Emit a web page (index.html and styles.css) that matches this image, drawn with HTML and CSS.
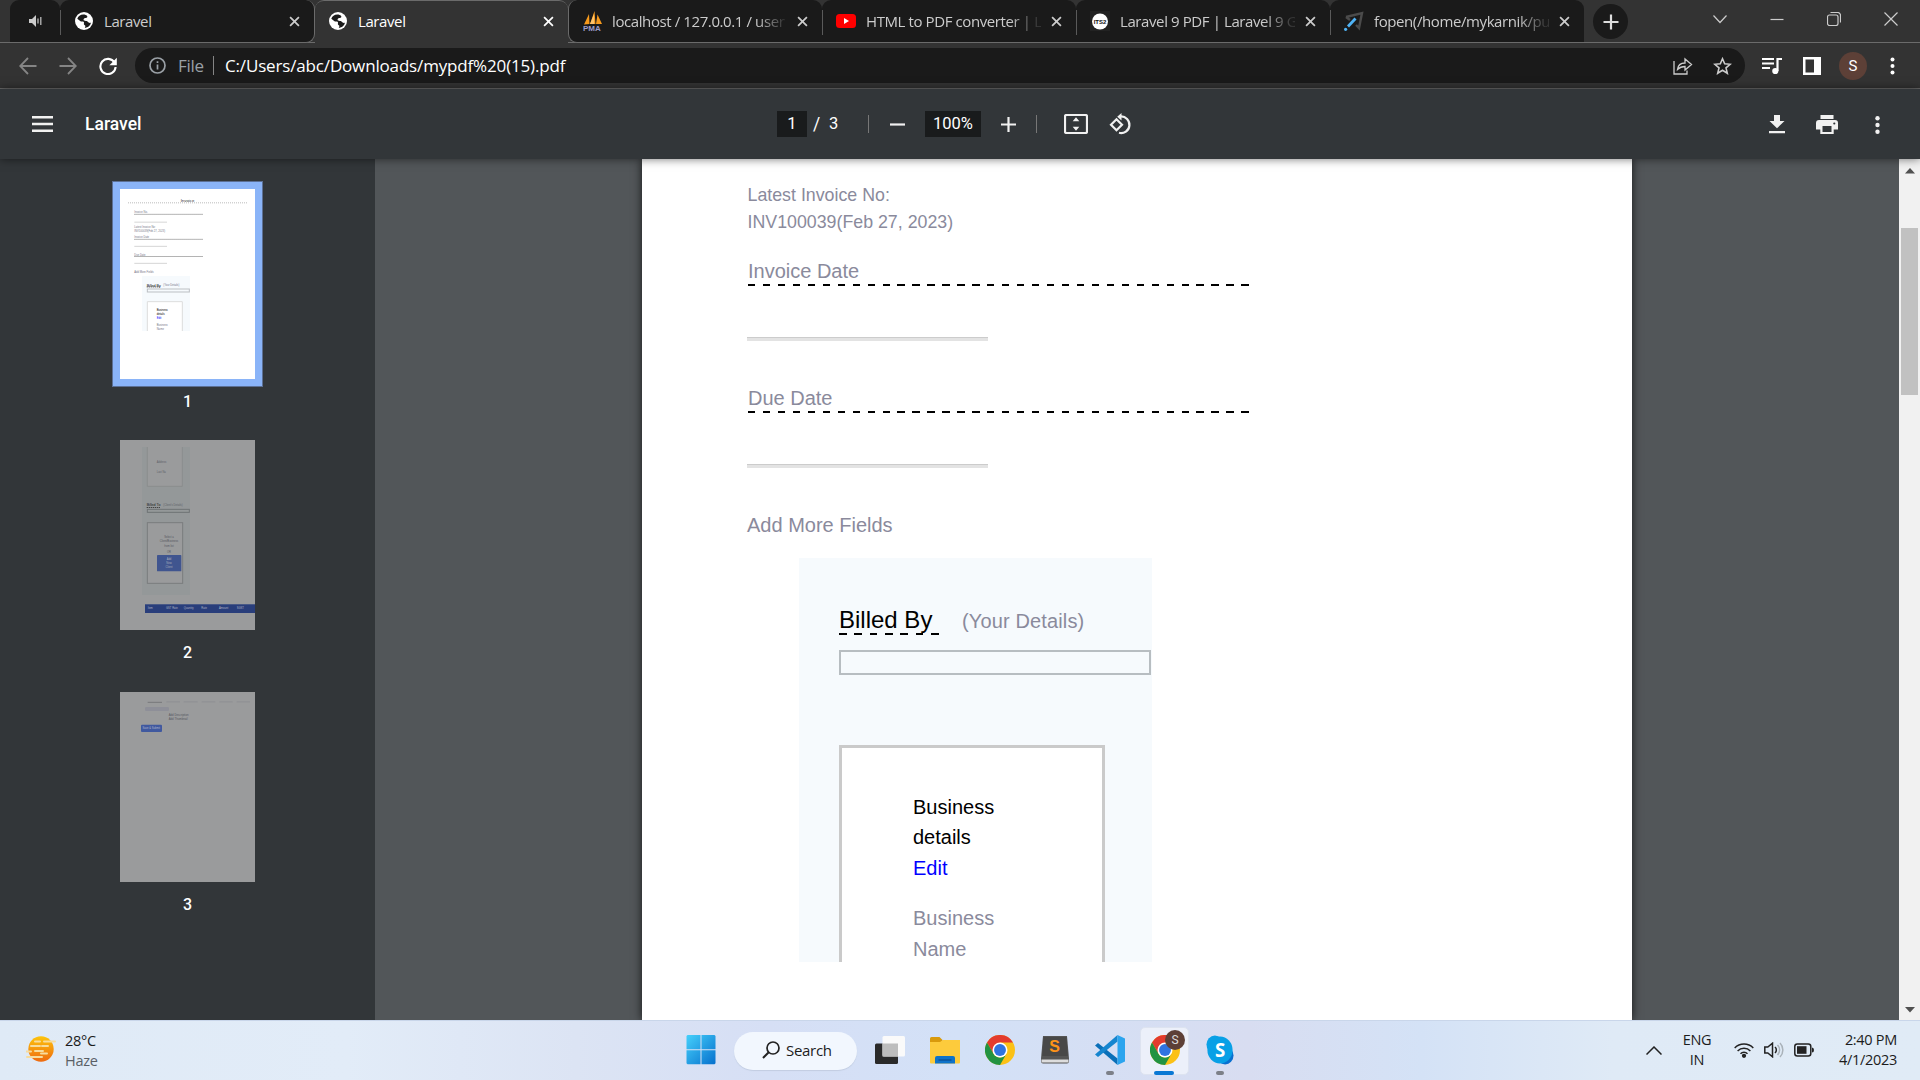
FILE: index.html
```html
<!DOCTYPE html>
<html lang="en">
<head>
<meta charset="utf-8">
<title>Laravel</title>
<link rel="stylesheet" href="styles.css">
</head>
<body>
<svg class="defs" aria-hidden="true">
  <symbol id="globe" viewBox="0 0 18 18"><circle cx="9" cy="9" r="9" fill="#fff"/><path d="M9.500 2.600C6 2 3.200 4 2.300 6.800l3.200 2.400c1 .6 2.500-.2 3.300.8.700.9-.3 1.700.2 2.600.4.800 1.300.6 1.400 1.600l-.6 1.600c3.200 0 5.600-2.200 6.100-5-1.600.4-2.500-.2-3.400-1.200-.9-.9-2.300-.4-3.300-1-.9-.6-.8-1.600 0-2.200.9-.7 2.400-.1 3-1.100.5-.8-.3-1.600-1-2z" fill="#1b1b1b"/></symbol>
  <symbol id="x" viewBox="0 0 12 12"><path d="M1.200 1.200l9.600 9.600M10.800 1.200L1.200 10.800" stroke="currentColor" stroke-width="1.900" fill="none"/></symbol>
  <symbol id="chrome" viewBox="0 0 48 48"><circle cx="24" cy="24" r="24" fill="#fbc116"/><path d="M24 12h20.800A24 24 0 0 0 3.200 12l10.400 18z" fill="#e33b2e"/><path d="M3.200 12A24 24 0 0 0 24 48l10.400-18A12 12 0 0 1 13.600 30z" fill="#229342"/><circle cx="24" cy="24" r="12" fill="#fff"/><circle cx="24" cy="24" r="9.500" fill="#2f73e0"/></symbol>
</svg>

<header class="tabs">
  <div class="tab pinned">
    <svg width="14" height="14" viewBox="0 0 14 14"><path d="M0 5h3l4-4v12L3 9H0z" fill="#ccc"/><path d="M9 4.500v5M11.800 3v8" stroke="#bbb" stroke-width="1.300"/></svg>
  </div>
  <div class="tab before">
    <svg class="fav"><use href="#globe"/></svg><span class="name">Laravel</span><svg class="close"><use href="#x"/></svg>
  </div>
  <div class="tab active">
    <svg class="fav"><use href="#globe"/></svg><span class="name">Laravel</span><svg class="close"><use href="#x"/></svg>
  </div>
  <div class="tab after">
    <svg class="fav wide" viewBox="0 0 20 20"><path d="M1 13.500L6 3l.5 10zM7 13L11.500 0l1 13zM13 13L14.500 3.500 19 13z" fill="#f79a1c"/><path d="M7 13L11 3l.2 10z" fill="#ffc36b"/><text x="0" y="19.500" class="pma">PMA</text></svg><span class="name fade">localhost / 127.0.0.1 / user</span><svg class="close"><use href="#x"/></svg>
  </div>
  <div class="tab sep">
    <svg class="fav wide" viewBox="0 0 20 20"><rect y="3" width="20" height="14" rx="3.500" fill="#f00"/><path d="M8 7l5 3-5 3z" fill="#fff"/></svg><span class="name fade">HTML to PDF converter | L</span><svg class="close"><use href="#x"/></svg>
  </div>
  <div class="tab sep">
    <svg class="fav wide" viewBox="0 0 20 20"><rect width="20" height="20" fill="#222"/><circle cx="10" cy="10.500" r="8" fill="#fff"/><text x="10" y="13" class="its">ITS2</text></svg><span class="name fade">Laravel 9 PDF | Laravel 9 G</span><svg class="close"><use href="#x"/></svg>
  </div>
  <div class="tab sep">
    <svg class="fav wide" viewBox="0 0 20 20"><path d="M2 6L18 2l-3 15-3-3M2 6l4 3" fill="none" stroke="#4b4b4b" stroke-width="2.400"/><path d="M4 15.500L11.500 7.500" stroke="#4fb3f6" stroke-width="2.800"/><circle cx="1.600" cy="18.300" r="1.600" fill="#4fb3f6"/></svg><span class="name fade">fopen(/home/mykarnik/pu</span><svg class="close"><use href="#x"/></svg>
  </div>
  <div class="newtab"><svg width="16" height="16" viewBox="0 0 16 16"><path d="M8 .5v15M.5 8h15" stroke="#ddd" stroke-width="2.200"/></svg></div>
  <div class="winctl">
    <svg width="14" height="14" viewBox="0 0 14 14"><path d="M.5 3.500l6.500 7 6.500-7" /></svg>
    <svg width="14" height="14" viewBox="0 0 14 14"><path d="M.5 7.500h13" stroke="#fff"/></svg>
    <svg width="14" height="14" viewBox="0 0 14 14"><rect x=".5" y="3" width="10.500" height="10.500" rx="2" stroke="#fff"/><path d="M3.500.5h7a3 3 0 0 1 3 3v7" stroke="#fff"/></svg>
    <svg width="14" height="14" viewBox="0 0 14 14"><path d="M.5.5l13 13M13.500.5l-13 13" stroke="#fff"/></svg>
  </div>
</header>

<nav class="addressbar">
  <div class="navs">
    <svg width="18" height="18" viewBox="0 0 18 18"><path d="M17.500 9H1.500M9 1L1.200 9 9 17" stroke="#858585" stroke-width="1.800" fill="none"/></svg>
    <svg width="18" height="18" viewBox="0 0 18 18"><path d="M.5 9h16M9 1l7.800 8L9 17" stroke="#858585" stroke-width="1.800" fill="none"/></svg>
    <svg width="18" height="18" viewBox="0 0 18 18"><path d="M15.500 5.500A7.600 7.600 0 1 0 16.600 10" stroke="#fff" stroke-width="2.100" fill="none"/><path d="M17.800.8v7.400h-7.400z" fill="#fff"/></svg>
  </div>
  <div class="omnibox">
    <svg width="17" height="17" viewBox="0 0 17 17"><circle cx="8.500" cy="8.500" r="7.500" stroke="#9aa0a6" stroke-width="1.700" fill="none"/><path d="M8.500 7.500v5M8.500 4.300v1.800" stroke="#9aa0a6" stroke-width="1.700"/></svg>
    <span class="scheme">File</span><span class="bar"></span><span class="url">C:/Users/abc/Downloads/mypdf%20(15).pdf</span>
    <svg class="share" width="20" height="18" viewBox="0 0 20 18"><path d="M1 4v13h13v-3.500" /><path d="M4.500 12.500C5 8 8 6 12 6V2l6.500 5.500L12 13V9.500C8.500 9.500 6.500 10.500 4.500 12.500z"/></svg>
    <svg width="19" height="18" viewBox="0 0 19 18"><path d="M9.500 1.800l2.200 5 5.500.5-4.200 3.600 1.300 5.300-4.800-2.900-4.800 2.900L6 10.900 1.800 7.300l5.500-.5z" stroke="#ccc" stroke-width="1.600" fill="none"/></svg>
  </div>
  <div class="ext">
    <svg width="20" height="18" viewBox="0 0 20 18"><path d="M0 2h12M0 6.500h12M0 11h8" stroke="#fff" stroke-width="2"/><path d="M15.500 14V2H20" stroke="#fff" stroke-width="2.200" fill="none"/><circle cx="13.300" cy="14" r="3.100" fill="#fff"/></svg>
    <svg width="18" height="18" viewBox="0 0 18 18"><path d="M0 0h18v18H0z" fill="#fff"/><path d="M2.500 2.500h8.500v13H2.500z" fill="#333"/></svg>
    <span class="avatar">S</span>
    <svg width="5" height="18" viewBox="0 0 5 18"><circle cx="2.500" cy="2.500" r="2"/><circle cx="2.500" cy="9" r="2"/><circle cx="2.500" cy="15.500" r="2"/></svg>
  </div>
</nav>

<section class="pdfbar">
  <div class="pdf-left">
    <svg width="21" height="16" viewBox="0 0 21 16"><path d="M0 1.300h21M0 8h21M0 14.700h21" stroke="#f1f1f1" stroke-width="2.400"/></svg>
    <b>Laravel</b>
  </div>
  <div class="pdf-mid">
    <span class="field pg">1</span><span class="slash">/</span><span class="total">3</span>
    <i class="divider"></i>
    <svg class="minus" width="15" height="15" viewBox="0 0 15 15"><path d="M0 7.500h15"/></svg>
    <span class="field zoom">100%</span>
    <svg class="plus" width="15" height="15" viewBox="0 0 15 15"><path d="M0 7.500h15M7.500 0v15"/></svg>
    <i class="divider"></i>
    <svg class="fit" width="24" height="20" viewBox="0 0 24 20"><rect x="1" y="1" width="22" height="18" rx="1.500"/><path d="M12 3.200l3.300 4H8.700zM12 16.800l3.300-4H8.700z" class="solid"/></svg>
    <svg class="rot" width="23" height="22" viewBox="0 0 23 22"><path d="M7.500 6.300L13 11.800l-5.500 5.500L2 11.800z"/><path d="M11.500 3.500a8.300 8.300 0 1 1-1.500 16.300"/><path d="M12.500 0v7.500L8.200 3.700z" class="solid"/></svg>
  </div>
  <div class="pdf-right">
    <svg width="16" height="19" viewBox="0 0 16 19"><path d="M5 0h6v6h4.500L8 13.300.5 6H5zM0 16h16v2.300H0z"/></svg>
    <svg width="22" height="19" viewBox="0 0 22 19"><path d="M4.500 0h13v4h-13zM3 5h16a3 3 0 0 1 3 3v6.500h-4.300V19H4.300v-4.500H0V8a3 3 0 0 1 3-3z"/><path d="M6.500 11h9v6h-9z" fill="#323639"/><circle cx="18.300" cy="8.500" r="1.100" fill="#323639"/></svg>
    <svg width="5" height="18" viewBox="0 0 5 18"><circle cx="2.500" cy="2.300" r="2.200"/><circle cx="2.500" cy="9" r="2.200"/><circle cx="2.500" cy="15.700" r="2.200"/></svg>
  </div>
</section>

<main class="viewer">
  <aside class="thumbs">
    <div class="thumb selected">
      <svg viewBox="90 87 405 570">
        <rect x="90" y="87" width="405" height="570" fill="#fff"/>
        <text x="272" y="126" font-size="13" fill="#333">Invoice</text>
        <path d="M114 128.500h357" stroke="#bbb" stroke-width="3" stroke-dasharray="3 3"/>
        <g font-size="8" fill="#778">
          <text x="133" y="159">Invoice No.</text><text x="133" y="204">Latest Invoice No:</text><text x="133" y="215">INV100039(Feb 27, 2023)</text><text x="133" y="233">Invoice Date</text><text x="133" y="288">Due Date</text><text x="133" y="339">Add More Fields</text>
        </g>
        <path d="M133 163h206M133 238h206M133 289.500h206" stroke="#777" stroke-width="2.500" stroke-dasharray="4 2"/>
        <path d="M133 186.500h98M133 259h98M133 310h98" stroke="#ccc" stroke-width="2.500"/>
        <rect x="156" y="348" width="144" height="165" fill="#f6fafd"/>
        <text x="170" y="380" font-size="11" fill="#000">Billed By</text><text x="220" y="378" font-size="8" fill="#778">(Your Details)</text>
        <path d="M170 381h42" stroke="#444" stroke-width="2" stroke-dasharray="4 2"/>
        <rect x="172" y="387" width="126" height="9" fill="none" stroke="#bbbfc3" stroke-width="3"/>
        <path d="M172 513v-88h105v88" fill="#fff" stroke="#ddd" stroke-width="3"/>
        <g font-size="8.200"><text x="200" y="453">Business</text><text x="200" y="465">details</text><text x="200" y="477" fill="#00f">Edit</text><text x="200" y="498" fill="#778">Business</text><text x="200" y="510" fill="#778">Name</text></g>
      </svg>
    </div>
    <span class="num">1</span>
    <div class="thumb">
      <svg viewBox="90 60 405 570">
        <rect x="90" y="60" width="405" height="570" fill="#9a9b9c"/>
        <rect x="156" y="81" width="144" height="444" fill="#949899"/>
        <path d="M172 81v118h105V81" fill="#9a9b9c" stroke="#888b8c" stroke-width="2.500"/>
        <g font-size="8" fill="#60626a"><text x="200" y="129">Address</text><text x="200" y="159">Last Na</text><text x="220" y="258">(Client's Details)</text></g>
        <text x="170" y="258" font-size="11" fill="#222">Billed To</text>
        <path d="M170 262.500h42" stroke="#333" stroke-width="2.500" stroke-dasharray="4 2"/>
        <rect x="172" y="268" width="126" height="9" fill="none" stroke="#6f7375" stroke-width="3"/>
        <rect x="172" y="308" width="106" height="182" fill="#9a9b9c" stroke="#7a7d7e" stroke-width="3"/>
        <g font-size="8" fill="#55575f" text-anchor="middle"><text x="237" y="354">Select a</text><text x="237" y="366">Client/Business</text><text x="237" y="381">from list</text><text x="237" y="399">OR</text></g>
        <rect x="201" y="405" width="73" height="49" rx="2" fill="#40558f"/>
        <g font-size="8" fill="#a8adba" text-anchor="middle"><text x="237" y="420">Add</text><text x="237" y="432">New</text><text x="237" y="444">Client</text></g>
        <rect x="165" y="552" width="330" height="27" fill="#293e7b"/><path d="M165 553.500h330" stroke="#5a668c" stroke-width="2"/>
        <g font-size="8" fill="#aeb3c1"><text x="173" y="567">Item</text><text x="228" y="567">GST Rate</text><text x="281" y="567">Quantity</text><text x="334" y="567">Rate</text><text x="387" y="567">Amount</text><text x="440" y="567">SGST</text></g>
      </svg>
    </div>
    <span class="num">2</span>
    <div class="thumb">
      <svg viewBox="90 66 405 570">
        <rect x="90" y="66" width="405" height="570" fill="#9a9b9c"/>
        <path d="M229 95.500h41M281 95.500h42M335 95.500h41M388 95.500h40M440 95.500h40" stroke="#909194" stroke-width="4"/><path d="M173 97h43" stroke="#77797b" stroke-width="3"/>
        <rect x="165" y="111" width="72" height="12" rx="4" fill="#8e8f98"/>
        <g font-size="8.500" fill="#55575f"><text x="236" y="138">Add Description</text><text x="236" y="150">Add Thumbnail</text></g>
        <rect x="153" y="164" width="63" height="22" rx="3" fill="#40599f"/><text x="184" y="177" font-size="8" fill="#b0b6ca" text-anchor="middle">Save &amp; Submit</text>
      </svg>
    </div>
    <span class="num">3</span>
  </aside>

  <section class="canvas">
    <article class="page">
      <p class="latest">Latest Invoice No:<br>INV100039(Feb 27, 2023)</p>
      <label class="label">Invoice Date</label>
      <div class="dashes"></div>
      <div class="rule"></div>
      <label class="label due">Due Date</label>
      <div class="dashes"></div>
      <div class="rule"></div>
      <p class="more">Add More Fields</p>
      <div class="billed">
        <div class="billed-head"><h2>Billed By</h2><span>(Your Details)</span></div>
        <div class="select"></div>
        <div class="details">
          <p>Business<br>details<br><a>Edit</a></p>
          <p class="muted">Business<br>Name</p>
        </div>
      </div>
    </article>
  </section>

  <div class="scrollbar">
    <svg width="10" height="6" viewBox="0 0 10 6"><path d="M5 0l5 5.500H0z" fill="#505050"/></svg>
    <div class="grip"></div>
    <svg class="down" width="10" height="6" viewBox="0 0 10 6"><path d="M5 5.500L0 0h10z" fill="#505050"/></svg>
  </div>
</main>

<footer class="taskbar">
  <div class="weather">
    <svg width="30" height="26" viewBox="0 0 30 26"><defs><linearGradient id="sun" x1="0" y1="0" x2="0" y2="1"><stop offset="0" stop-color="#fdc40c"/><stop offset="1" stop-color="#ee6a10"/></linearGradient></defs><circle cx="15" cy="13" r="12.700" fill="url(#sun)"/><path d="M9 5.500h5M18 5.500h11M5 10h9M16 10h6M9 15h8M0 15.500h5M15 17.500h6M1 21h15" stroke="#f7dc9d" stroke-width="2" stroke-linecap="round"/></svg>
    <div>28°C<br><span>Haze</span></div>
  </div>
  <div class="apps">
    <div class="app"><svg width="30" height="30" viewBox="0 0 30 30"><defs><linearGradient id="win" x1="0" y1="0" x2="1" y2="1"><stop offset="0" stop-color="#45d0fb"/><stop offset="1" stop-color="#0670cd"/></linearGradient></defs><path d="M1.500 0H14.500v14.300H.5V1zM15.500 0h13l1 1v13.300h-14zM.5 15.300h14v14H1.500l-1-1zM15.500 15.300h14v13l-1 1h-13z" fill="url(#win)"/></svg></div>
    <div class="search"><svg width="18" height="18" viewBox="0 0 18 18"><circle cx="11" cy="7" r="6" fill="none" stroke="#222" stroke-width="1.700"/><path d="M6.700 11.300L1 17" stroke="#222" stroke-width="2"/></svg><span>Search</span></div>
    <div class="app"><svg width="30" height="30" viewBox="0 0 30 30"><rect x="0" y="8.500" width="23" height="20.500" rx="1.500" fill="#2a2a2a"/><rect x="7.500" y="1" width="22.500" height="20.500" rx="1.500" fill="#fafafa"/><path d="M7.500 8.500H23v13H7.500z" fill="#bdbdbd"/></svg></div>
    <div class="app"><svg width="30" height="30" viewBox="0 0 30 30"><path d="M0 3.500A1.500 1.500 0 0 1 1.500 2h8l3 3v4H0z" fill="#d99a0c"/><path d="M0 7h10l3-2h17v22.500a1 1 0 0 1-1 1H1a1 1 0 0 1-1-1z" fill="#fdcb3c"/><path d="M5 28.500V23a2 2 0 0 1 2-2h16a2 2 0 0 1 2 2v5.500z" fill="#0f73c9"/><path d="M8.500 25h13" stroke="#0b4f94" stroke-width="1.300"/></svg></div>
    <div class="app"><svg width="30" height="30"><use href="#chrome"/></svg></div>
    <div class="app"><svg width="30" height="30" viewBox="0 0 30 30"><path d="M3 1h24l2 22.500v3a2 2 0 0 1-2 2H3a2 2 0 0 1-2-2v-3z" fill="#555"/><path d="M3.500 2h23l1.300 19H2.200z" fill="#484848"/><path d="M1.500 24.500h27v3h-27z" fill="#ddd"/><text x="14.500" y="17" class="subl">S</text></svg></div>
    <div class="app run"><svg width="30" height="30" viewBox="0 0 30 30"><path d="M0 10.500L3 8l19.500 15.500V30z" fill="#0a6fb8"/><path d="M0 19.500L3 22 22.500 6.500V0z" fill="#1585cf"/><path d="M22.500 0L30 3.500v23L22.500 30z" fill="#2ba4ee"/></svg></div>
    <div class="app current"><svg width="30" height="30"><use href="#chrome"/></svg><span class="badge">S</span></div>
    <div class="app run"><svg width="28" height="30" viewBox="0 0 30 30" preserveAspectRatio="none"><circle cx="9.500" cy="9.500" r="9" fill="#0aa0e6"/><circle cx="20.500" cy="20.500" r="9" fill="#0a70d0"/><circle cx="15" cy="15" r="13.500" fill="#08a0e6"/><text x="15" y="22" class="sky">S</text></svg></div>
  </div>
  <div class="tray">
    <svg class="chev" width="16" height="9" viewBox="0 0 16 9"><path d="M.5 8.500L8 1l7.500 7.500" fill="none" stroke="#222" stroke-width="1.500"/></svg>
    <div class="lang">ENG<br>IN</div>
    <svg class="wifi" width="20" height="16" viewBox="0 0 20 16" fill="none" stroke="#222" stroke-width="1.500"><path d="M.7 6a13 13 0 0 1 18.600 0M3.600 9a9 9 0 0 1 12.800 0M6.500 11.800a5 5 0 0 1 7 0"/><circle cx="10" cy="13.800" r="1.400" fill="#222"/></svg>
    <svg class="snd" width="20" height="16" viewBox="0 0 20 16" fill="none" stroke="#222" stroke-width="1.500"><path d="M.8 5h3L8.500 1.200v13.600L3.800 11h-3zM11 5a4 4 0 0 1 0 6"/><path d="M13.500 3a7 7 0 0 1 0 10M16 1a10 10 0 0 1 0 14" stroke="#aab2b9"/></svg>
    <svg class="bat" width="20" height="14" viewBox="0 0 20 14"><rect x=".8" y="1" width="16" height="12" rx="2.500" fill="none" stroke="#222" stroke-width="1.500"/><rect x="3" y="3.200" width="9.500" height="7.600" fill="#222"/><path d="M18 4.500q2 0 2 2.500t-2 2.500z" fill="#222"/></svg>
    <div class="clock">2:40 PM<br>4/1/2023</div>
  </div>
</footer>
</body>
</html>
```

FILE: styles.css
```css
* { box-sizing: border-box; }
body { margin: 0; width: 1920px; height: 1080px; overflow: hidden; display: flex; flex-direction: column; font-family: "Open Sans", "Noto Sans", sans-serif; background: #333; }
p, h2 { margin: 0; font-weight: 400; }
svg { display: block; flex: none; }
.defs { width: 0; height: 0; position: absolute; }

/* Tab strip */
.tabs { height: 43px; flex: none; display: flex; padding-left: 10px; background: #333; box-shadow: inset 0 -1px #6b6b6b; }
.tab { width: 254px; height: 42px; display: flex; align-items: center; padding: 0 14px 0 15px; background: #1a1a1a; border-radius: 9px 9px 0 0; color: #ccc; }
.tab.pinned { width: 50px; justify-content: center; padding: 0 0 0 2px; }
.tab.before { width: 255px; height: 43px; border: 0 solid #6b6b6b; border-width: 0 1px 1px 0; border-radius: 9px 9px 9px 0; }
.tab.active { width: 253px; height: 43px; padding-left: 14px; background: #333; border-top: 1px solid #6b6b6b; padding-bottom: 2px; color: #fff; }
.tab.after { height: 43px; border: 0 solid #6b6b6b; border-width: 0 0 1px 1px; border-radius: 9px 9px 0 9px; padding-left: 15px; }
.tab.sep, .tab.before { background: linear-gradient(#5a5a5a, #5a5a5a) 0 10px / 1px 25px no-repeat #1a1a1a; }
.fav { width: 18px; height: 18px; margin-right: 11px; }
.fav.wide { width: 20px; height: 20px; margin: 0 9px 0 -1px; }
.tab.sep .fav.wide { margin-left: -1px; margin-right: 10px; }
.name { flex: 1; font-size: 15px; line-height: 20px; letter-spacing: -.4px; white-space: nowrap; overflow: hidden; margin: 0 10px 1px 0; }
.fade { overflow: visible; width: 0; mask-image: linear-gradient(90deg, #000 82%, rgba(0, 0, 0, .15) 98%); }
.close { width: 11px; height: 11px; }
.pma { font: bold 8px "Liberation Sans", sans-serif; fill: #9c9cc9; }
.its { font: bold 6px "Liberation Sans", sans-serif; fill: #111; text-anchor: middle; }
.newtab { width: 35px; height: 35px; margin: 4px 0 0 9px; border-radius: 50%; background: #1a1a1a; display: grid; place-items: center; }
.winctl { margin-left: auto; display: flex; gap: 43px; align-items: center; height: 37px; padding-right: 22px; }
.winctl path, .winctl rect { fill: none; stroke: #ccc; stroke-width: 1.200; }

/* Address bar */
.addressbar { height: 46px; flex: none; display: flex; align-items: center; border-bottom: 1px solid #6b6b6b; padding: 0 25px 0 19px; background: #333; }
.navs { display: flex; gap: 22px; width: 116px; }
.omnibox { width: 1610px; height: 35px; border-radius: 18px; background: #1a1a1a; display: flex; align-items: center; padding: 0 13px 0 14px; font-size: 17px; color: #fff; }
.scheme { color: #9aa0a6; margin-left: 12px; width: 27px; letter-spacing: -.3px; }
.bar { width: 1px; height: 19px; background: #858585; margin: 0 11px 0 8px; }
.url { letter-spacing: -.16px; }
.share { margin: 0 20px 0 auto; fill: none; stroke: #ccc; stroke-width: 1.300; }
.ext { flex: 1; display: flex; align-items: center; padding-left: 17px; fill: #fff; }
.ext svg:first-child { margin-right: 21px; }
.avatar { width: 28px; height: 28px; margin: 0 23px 0 18px; border-radius: 50%; background: #5d4037; color: #fff; font: 15px/28px Roboto, sans-serif; text-align: center; }

/* PDF toolbar */
.pdfbar { height: 70px; flex: none; display: flex; align-items: center; background: #323639; color: #fff; font: 17.500px/26px Roboto, sans-serif; position: relative; z-index: 2; box-shadow: 0 0 9px rgba(0, 0, 0, .55); }
.pdf-left { width: 777px; display: flex; align-items: center; padding-left: 32px; gap: 32px; }
.pdf-left b { font-weight: 500; }
.pdf-mid { display: flex; align-items: center; stroke: #f1f1f1; stroke-width: 2.200; fill: none; }
.solid { fill: #f1f1f1; stroke: none; }
.field { background: #191b1c; height: 26px; text-align: center; font-size: 16.500px; }
.pg { width: 30px; } .zoom { width: 56px; }
.slash { width: 22px; padding-left: 6px; }
.total { width: 39px; font-size: 16.500px; }
.divider { width: 1px; height: 18px; background: #777; }
.minus { margin: 0 20px 0 21px; } .plus { margin: 0 20px; }
.fit { margin: 0 21px 0 27px; }
.pdf-right { margin-left: auto; display: flex; align-items: center; gap: 31px; padding: 1px 40px 0 0; fill: #f1f1f1; }
.pdf-right svg:last-child { margin-left: 6px; }

/* Viewer */
.viewer { height: 861px; flex: none; display: flex; background: #525659; }
.thumbs { width: 375px; background: #323639; padding-top: 22px; display: flex; flex-direction: column; align-items: center; color: #fff; font: 500 16px/22px Roboto, sans-serif; }
.thumb { width: 151px; height: 206px; padding: 8px; }
.thumb.selected { background: #8ab4f8; border: 1px solid #5c7095; padding: 7px; }
.thumb svg { width: 135px; height: 190px; font-family: "Liberation Sans", sans-serif; }
.num { height: 22px; margin: 4px 0 20px; }
.num:nth-child(2) { margin-bottom: 19px; }
.canvas { flex: 1; overflow: hidden; padding-left: 267px; }
.page { width: 990px; height: 100%; background: #fff; box-shadow: 0 0 9px rgba(0, 0, 0, .75); padding: 23px 0 0 105px; font-family: "Liberation Sans", Arial, sans-serif; color: #8a8a9c; font-size: 20px; line-height: 30px; }
.latest { font-size: 17.800px; line-height: 27px; height: 54px; margin: 0 0 20px .5px; }
.label { display: block; height: 28px; margin-left: 1px; }
.label.due { margin-top: 42px; }
.dashes { width: 501px; height: 3px; margin-left: 1px; background: repeating-linear-gradient(90deg, #000 0 7.300px, transparent 7.300px 14.950px) 0 0 / 100% 2.400px no-repeat; }
.rule { width: 241px; height: 4px; margin-top: 50px; background: #e3e3e3; border-top: 1px solid #ccc; }
.more { margin-top: 42px; }
.billed { width: 353px; height: 404px; margin: 18px 0 0 52px; padding: 46px 0 0 40px; background: #f6fafd; overflow: hidden; }
.billed-head { display: flex; gap: 22px; height: 46px; }
.billed-head h2 { width: 101px; height: 31px; font-size: 24px; line-height: 32px; color: #000; background: repeating-linear-gradient(90deg, #000 0 7.700px, transparent 7.700px 15.330px) 0 28.500px / 100% 2.500px no-repeat; }
.billed-head span { padding-top: 2px; letter-spacing: .14px; }
.select { width: 312px; height: 25px; border: 2.500px solid #b7bdc1; }
.details { width: 266px; height: 230px; margin-top: 70px; padding: 44px 0 0 71px; background: #fff; border: 3px solid #cacaca; color: #000; line-height: 30.400px; }
.details a { color: #00f; }
.muted { color: #8a8a9c; margin-top: 20px; }
.scrollbar { width: 21px; background: #f1f1f1; display: flex; flex-direction: column; align-items: center; padding: 9px 0 7px; }
.grip { width: 17px; height: 167px; margin-top: 54px; background: #c1c1c1; }
.down { margin-top: auto; }

/* Taskbar */
.taskbar { height: 60px; flex: none; display: flex; align-items: center; color: #1c1c1c; border-top: 1px solid #c9d6ea; font-size: 14.500px; line-height: 20px; letter-spacing: -.3px; background: linear-gradient(90deg, #dfeaf6 0, #e2ecf8 18%, #dce4f4 30%, #d6dff5 40%, #d3e1f7 50%, #d8ddf1 65%, #d4e2f6 74%, #dfeaf6 84%, #e0ebf6 100%); }
.weather { width: 673px; display: flex; padding-left: 26px; gap: 9px; }
.weather svg { margin-top: 5px; }
.weather span { color: #5a5f66; }
.apps { display: flex; align-items: center; width: 574px; }
.app { width: 55px; height: 48px; flex: none; display: grid; place-items: center; position: relative; padding-bottom: 1px; }
.run::after, .current::after { content: ""; position: absolute; left: 23.500px; bottom: 0; width: 8px; height: 4px; border-radius: 2px; background: #7c8088; }
.current::before { content: ""; position: absolute; inset: 0 3px; background: #ecf0fa; border-radius: 5px; border: 1px solid #dde3f0; }
.current svg { position: relative; }
.current::after { left: 17px; width: 20px; background: #0a78d4; }
.badge { position: absolute; left: 28px; top: 3px; width: 20px; height: 20px; border-radius: 50%; background: #5d4037; color: #ddd; font: 12px/20px Roboto, sans-serif; text-align: center; }
.search { width: 123px; height: 38px; margin: 0 5px 0 6px; border-radius: 19px; background: #f2f7fe; box-shadow: 0 1px 1px #c2cde2; display: flex; align-items: center; padding: 0 0 1px 28px; gap: 6px; font-size: 15px; }
.subl { font: bold 16px "Liberation Sans", sans-serif; fill: #ff9318; text-anchor: middle; }
.sky { font: bold 20px "Open Sans", sans-serif; fill: #fff; text-anchor: middle; }
.tray { margin-left: auto; padding: 0 23px 1px 0; display: flex; align-items: center; }
.lang { width: 32px; margin: 0 21px 0 19px; text-align: center; }
.wifi, .snd { margin-right: 10px; }
.clock { width: 83px; text-align: right; }
```
